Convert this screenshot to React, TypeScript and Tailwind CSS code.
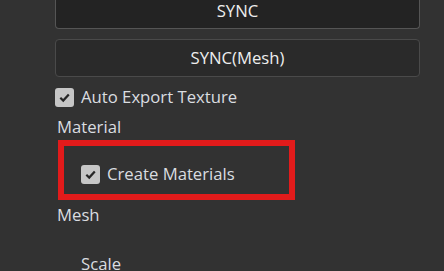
import { useState } from "react";

function Checkbox({ checked, onChange }: { checked: boolean; onChange: () => void }) {
  return (
    <button
      onClick={onChange}
      className="w-[19px] h-[19px] rounded-[3px] bg-[#c6c6c6] flex items-center justify-center shrink-0"
    >
      {checked && (
        <svg width="13" height="13" viewBox="0 0 13 13">
          <path d="M2.3 6.8 L5.2 9.6 L10.8 3.4" fill="none" stroke="#262626" strokeWidth="2.2" />
        </svg>
      )}
    </button>
  );
}

export default function App() {
  const [autoExport, setAutoExport] = useState(true);
  const [createMats, setCreateMats] = useState(true);

  return (
    <div
      className="w-[444px] h-[271px] overflow-hidden bg-[#323232] text-[#dadde0] text-[16.7px] relative"
      style={{ fontFamily: '"Open Sans", "Noto Sans", sans-serif' }}
    >
      <div className="pl-[55px] w-[420px] flex flex-col">
        {/* top of this button is scrolled out of view */}
        <button className="h-[29px] leading-[22px] pb-[6px] rounded-b-[4px] border border-t-0 border-[#555] bg-[#232323] text-[#eeeeee]">
          SYNC
        </button>
        <button className="mt-[10px] h-[38px] rounded-[4px] border border-[#4a4a4a] bg-[#2a2a2a] text-[#eeeeee]">
          SYNC(Mesh)
        </button>
        <label className="mt-[10px] h-[20px] flex items-center gap-[7px]">
          <Checkbox checked={autoExport} onChange={() => setAutoExport(!autoExport)} />
          <span>Auto Export Texture</span>
        </label>
        <div className="mt-[10px] h-[20px] pl-[2px] flex items-center">Material</div>
        <label className="mt-[27px] h-[20px] pl-[26px] flex items-center gap-[7px]">
          <Checkbox checked={createMats} onChange={() => setCreateMats(!createMats)} />
          <span>Create Materials</span>
        </label>
        <div className="mt-[21px] h-[20px] pl-[2px] flex items-center">Mesh</div>
        <div className="mt-[31px] h-[16px] leading-[16px] pl-[26px]">Scale</div>
      </div>
      <div className="absolute left-[58px] top-[140px] w-[237px] h-[60px] border-[6px] border-[#e21b1b] pointer-events-none" />
    </div>
  );
}
